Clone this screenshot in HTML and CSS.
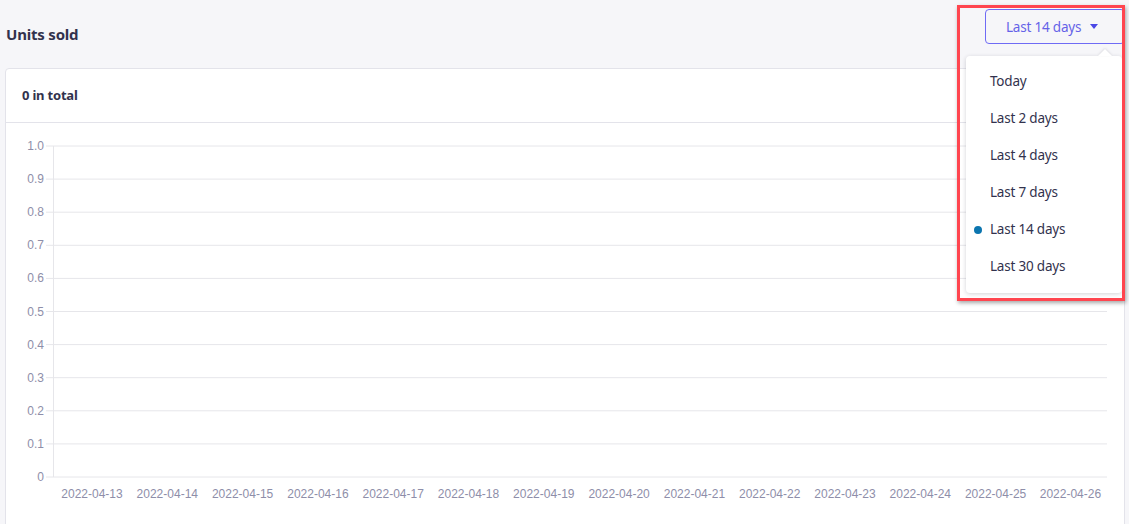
FILE: index.html
```html
<!DOCTYPE html>
<html>
<head>
<meta charset="utf-8">
<link rel="stylesheet" href="styles.css">
</head>
<body>
<div class="page">
  <div class="topbar">
    <h1 class="title">Units sold</h1>
    <div class="picker">
      <button class="picker-btn">Last 14 days <span class="caret"></span></button>
      <div class="menu">
        <div class="menu-item">Today</div>
        <div class="menu-item">Last 2 days</div>
        <div class="menu-item">Last 4 days</div>
        <div class="menu-item">Last 7 days</div>
        <div class="menu-item selected">Last 14 days</div>
        <div class="menu-item">Last 30 days</div>
      </div>
      <div class="highlight"></div>
    </div>
  </div>
  <div class="card">
    <div class="card-head">0 in total</div>
    <div class="card-body">
      <svg class="chart" width="1118" height="400" viewBox="0 0 1118 400">
        <g class="grid">
          <line x1="47" y1="23" x2="1101" y2="23"/>
          <line x1="47" y1="56.1" x2="1101" y2="56.1"/>
          <line x1="47" y1="89.2" x2="1101" y2="89.2"/>
          <line x1="47" y1="122.3" x2="1101" y2="122.3"/>
          <line x1="47" y1="155.4" x2="1101" y2="155.4"/>
          <line x1="47" y1="188.5" x2="1101" y2="188.5"/>
          <line x1="47" y1="221.6" x2="1101" y2="221.6"/>
          <line x1="47" y1="254.7" x2="1101" y2="254.7"/>
          <line x1="47" y1="287.8" x2="1101" y2="287.8"/>
          <line x1="47" y1="320.9" x2="1101" y2="320.9"/>
          <line x1="40" y1="354" x2="1101" y2="354"/>
          <line x1="40" y1="23" x2="47" y2="23"/>
          <line x1="40" y1="56.1" x2="47" y2="56.1"/>
          <line x1="40" y1="89.2" x2="47" y2="89.2"/>
          <line x1="40" y1="122.3" x2="47" y2="122.3"/>
          <line x1="40" y1="155.4" x2="47" y2="155.4"/>
          <line x1="40" y1="188.5" x2="47" y2="188.5"/>
          <line x1="40" y1="221.6" x2="47" y2="221.6"/>
          <line x1="40" y1="254.7" x2="47" y2="254.7"/>
          <line x1="40" y1="287.8" x2="47" y2="287.8"/>
          <line x1="40" y1="320.9" x2="47" y2="320.9"/>
          <line x1="47.5" y1="23" x2="47.5" y2="354"/>
        </g>
        <g class="ylabels">
          <text x="38" y="27">1.0</text>
          <text x="38" y="60.1">0.9</text>
          <text x="38" y="93.2">0.8</text>
          <text x="38" y="126.3">0.7</text>
          <text x="38" y="159.4">0.6</text>
          <text x="38" y="192.5">0.5</text>
          <text x="38" y="225.6">0.4</text>
          <text x="38" y="258.7">0.3</text>
          <text x="38" y="291.8">0.2</text>
          <text x="38" y="324.9">0.1</text>
          <text x="38" y="358">0</text>
        </g>
        <g class="xlabels">
          <text x="86" y="375">2022-04-13</text>
          <text x="161.3" y="375">2022-04-14</text>
          <text x="236.6" y="375">2022-04-15</text>
          <text x="311.9" y="375">2022-04-16</text>
          <text x="387.2" y="375">2022-04-17</text>
          <text x="462.5" y="375">2022-04-18</text>
          <text x="537.8" y="375">2022-04-19</text>
          <text x="613.1" y="375">2022-04-20</text>
          <text x="688.4" y="375">2022-04-21</text>
          <text x="763.7" y="375">2022-04-22</text>
          <text x="839" y="375">2022-04-23</text>
          <text x="914.3" y="375">2022-04-24</text>
          <text x="989.6" y="375">2022-04-25</text>
          <text x="1064.4" y="375">2022-04-26</text>
        </g>
      </svg>
    </div>
  </div>
</div>
</body>
</html>
```

FILE: styles.css
```css
html, body {
  margin: 0;
  padding: 0;
  background: #f6f6f9;
  font-family: "Noto Sans", "Open Sans", sans-serif;
  color: #32324d;
}

.page {
  padding: 9px 4px 0 5px;
  height: 515px;
  overflow: hidden;
}

.topbar {
  display: flex;
  justify-content: space-between;
  align-items: flex-end;
  height: 35px;
  margin-bottom: 24px;
}

.title {
  margin: 0 0 0 1px;
  font-size: 15px;
  line-height: 20px;
  font-weight: 700;
  color: #32324d;
  letter-spacing: -0.2px;
}

.picker {
  position: relative;
  height: 35px;
}

.picker-btn {
  display: flex;
  align-items: center;
  gap: 9px;
  height: 35px;
  width: 140px;
  padding: 0 0 0 20px;
  border: 1px solid #6f6bf5;
  border-radius: 4px;
  background: #f6f6f9;
  color: #6562e8;
  font-family: inherit;
  font-size: 13.5px;
  letter-spacing: -0.2px;
}

.caret {
  width: 0;
  height: 0;
  border-left: 4.5px solid transparent;
  border-right: 4.5px solid transparent;
  border-top: 5px solid #4a47e6;
}

.menu {
  position: absolute;
  top: 47px;
  right: 3px;
  width: 156px;
  padding: 7px 0 8px;
  background: #fff;
  border-radius: 4px;
  box-shadow: 0 1px 4px rgba(33, 33, 52, 0.2);
  z-index: 5;
}

.menu::before {
  content: "";
  position: absolute;
  top: -7px;
  right: 10px;
  width: 0;
  height: 0;
  border-left: 7px solid transparent;
  border-right: 7px solid transparent;
  border-bottom: 7px solid #fff;
  filter: drop-shadow(0 -1px 1px rgba(33, 33, 52, 0.12));
}

.menu-item {
  position: relative;
  height: 37px;
  line-height: 37px;
  padding-left: 24px;
  font-size: 13.5px;
  color: #32324d;
  letter-spacing: -0.2px;
}

.menu-item.selected::before {
  content: "";
  position: absolute;
  left: 8px;
  top: 15px;
  width: 8px;
  height: 8px;
  border-radius: 50%;
  background: #0c75af;
}

.highlight {
  position: absolute;
  top: -4px;
  left: -28px;
  width: 162px;
  height: 290px;
  border: 3px solid #ff454f;
  box-shadow: 1px 2px 4px rgba(0, 0, 0, 0.35);
  z-index: 6;
  pointer-events: none;
}

.card {
  background: #fff;
  border: 1px solid #e3e3ea;
  border-radius: 4px;
  height: 480px;
}

.card-head {
  height: 53px;
  line-height: 53px;
  padding-left: 16px;
  font-size: 13px;
  font-weight: 700;
  color: #32324d;
  border-bottom: 1px solid #e3e3ea;
  letter-spacing: -0.2px;
}

.chart {
  display: block;
}

.grid line {
  stroke: #e6e6ea;
  stroke-width: 1;
}

.ylabels text {
  font-family: "Liberation Sans", Arial, sans-serif;
  font-size: 12px;
  fill: #8e8ea9;
  text-anchor: end;
}

.xlabels text {
  font-family: "Liberation Sans", Arial, sans-serif;
  font-size: 12px;
  fill: #8e8ea9;
  text-anchor: middle;
}
```
